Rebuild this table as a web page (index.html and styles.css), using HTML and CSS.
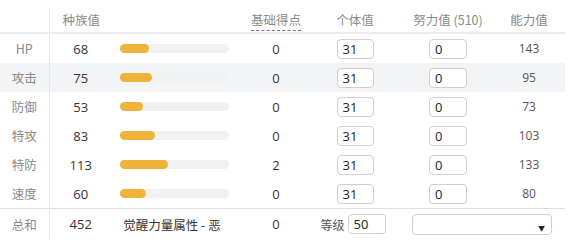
FILE: index.html
```html
<!DOCTYPE html>
<html lang="zh-CN">
<head>
<meta charset="utf-8">
<link rel="stylesheet" href="styles.css">
</head>
<body>
<div class="wrap">
<table class="stats">
  <colgroup>
    <col class="c-label"><col class="c-base"><col class="c-bar"><col class="c-pts"><col class="c-iv"><col class="c-ev"><col class="c-stat">
  </colgroup>
  <thead>
    <tr>
      <th></th>
      <th class="h-base">种族值</th>
      <th></th>
      <th><span class="dotted">基础得点</span></th>
      <th>个体值</th>
      <th>努力值 (510)</th>
      <th class="h-stat">能力值</th>
    </tr>
  </thead>
  <tbody>
    <tr>
      <td class="label">HP</td><td class="num">68</td>
      <td><div class="track"><div class="fill" style="width:29px"></div></div></td>
      <td class="num">0</td>
      <td><div class="inp">31</div></td><td><div class="inp ev">0</div></td>
      <td class="stat">143</td>
    </tr>
    <tr class="hl">
      <td class="label">攻击</td><td class="num">75</td>
      <td><div class="track"><div class="fill" style="width:32px"></div></div></td>
      <td class="num">0</td>
      <td><div class="inp">31</div></td><td><div class="inp ev">0</div></td>
      <td class="stat">95</td>
    </tr>
    <tr>
      <td class="label">防御</td><td class="num">53</td>
      <td><div class="track"><div class="fill" style="width:23px"></div></div></td>
      <td class="num">0</td>
      <td><div class="inp">31</div></td><td><div class="inp ev">0</div></td>
      <td class="stat">73</td>
    </tr>
    <tr>
      <td class="label">特攻</td><td class="num">83</td>
      <td><div class="track"><div class="fill" style="width:35px"></div></div></td>
      <td class="num">0</td>
      <td><div class="inp">31</div></td><td><div class="inp ev">0</div></td>
      <td class="stat">103</td>
    </tr>
    <tr>
      <td class="label">特防</td><td class="num">113</td>
      <td><div class="track"><div class="fill" style="width:48px"></div></div></td>
      <td class="num">2</td>
      <td><div class="inp">31</div></td><td><div class="inp ev">0</div></td>
      <td class="stat">133</td>
    </tr>
    <tr>
      <td class="label">速度</td><td class="num">60</td>
      <td><div class="track"><div class="fill" style="width:26px"></div></div></td>
      <td class="num">0</td>
      <td><div class="inp">31</div></td><td><div class="inp ev">0</div></td>
      <td class="stat">80</td>
    </tr>
  </tbody>
  <tfoot>
    <tr>
      <td class="label">总和</td><td class="num">452</td>
      <td class="hp-type">觉醒力量属性 - 恶</td>
      <td class="num">0</td>
      <td class="level"><span class="lv-label">等级</span><div class="inp lv">50</div></td>
      <td colspan="2"><div class="select"><span class="arrow">▼</span></div></td>
    </tr>
  </tfoot>
</table>
</div>
</body>
</html>
```
FILE: styles.css
```css
html, body {
  margin: 0;
  padding: 0;
  background: #ffffff;
}
body {
  font-family: "Open Sans", "Noto Sans CJK SC", sans-serif;
  color: #333333;
}
.wrap {
  padding-top: 8px;
}
.stats {
  border-collapse: collapse;
  table-layout: fixed;
  width: 565px;
  font-size: 13px;
}
.c-label { width: 49px; }
.c-base { width: 63px; }
.c-bar { width: 120px; }
.c-pts { width: 88px; }
.c-iv { width: 70px; }
.c-ev { width: 116px; }
.c-stat { width: 59px; }

.stats th {
  font-weight: normal;
  color: #8a8a8a;
  font-size: 12.5px;
  height: 23px;
  padding: 0 0 1px 0;
  text-align: center;
  vertical-align: middle;
  border-bottom: 2px solid #eaecef;
  font-family: "Noto Sans CJK SC", "Open Sans", sans-serif;
  line-height: 16px;
}
.stats th.h-base {
  text-align: left;
  padding-left: 13px;
}
.stats th.h-stat {
  padding-right: 13px;
}
.stats th:first-child,
.stats td:first-child {
  border-right: 1px solid #e3e5e8;
}
.dotted {
  border-bottom: 1px dashed #777;
  padding-bottom: 1px;
}
.stats td {
  height: 29px;
  padding: 0;
  text-align: center;
  vertical-align: middle;
}
.stats tbody tr.hl td {
  background: #f3f4f6;
}
.stats td.label {
  color: #8a8a8a;
  font-family: "Noto Sans CJK SC", sans-serif;
  font-size: 12.5px;
}
.stats td.num {
  color: #333;
}
.stats td.stat {
  padding-right: 13px;
  font-size: 12px;
  color: #555;
}
.track {
  width: 109px;
  height: 9px;
  margin-left: 8px;
  border-radius: 5px;
  background: #f1f1f1;
}
.fill {
  height: 9px;
  border-radius: 5px;
  background: #f0b23a;
}
.inp {
  box-sizing: border-box;
  width: 37px;
  height: 20px;
  margin: 0 auto;
  border: 1px solid #cfcfcf;
  border-radius: 4px;
  background: #fff;
  text-align: left;
  padding-left: 5px;
  line-height: 18px;
  font-size: 13px;
  color: #222;
}
.inp.ev {
  width: 38px;
}
.stats tfoot td {
  border-top: 1px solid #dcdfe3;
  height: 30px;
}
.stats tfoot td.hp-type {
  font-family: "Noto Sans CJK SC", sans-serif;
  font-size: 12.5px;
  color: #333;
}
.level {
  text-align: right;
}
.level .lv-label {
  font-family: "Noto Sans CJK SC", sans-serif;
  font-size: 12px;
  color: #555;
  vertical-align: middle;
  margin-right: 3px;
}
.inp.lv {
  display: inline-block;
  vertical-align: middle;
  width: 38px;
  height: 20px;
  margin: 0 4px 0 0;
}
.select {
  box-sizing: border-box;
  width: 140px;
  height: 21px;
  margin-left: 22px;
  border: 1px solid #cfcfcf;
  border-radius: 4px;
  background: #fff;
  display: flex;
  justify-content: flex-end;
  align-items: center;
  padding-right: 6px;
}
.arrow {
  font-size: 7px;
  color: #222;
  line-height: 1;
  margin-top: 8px;
}
```
